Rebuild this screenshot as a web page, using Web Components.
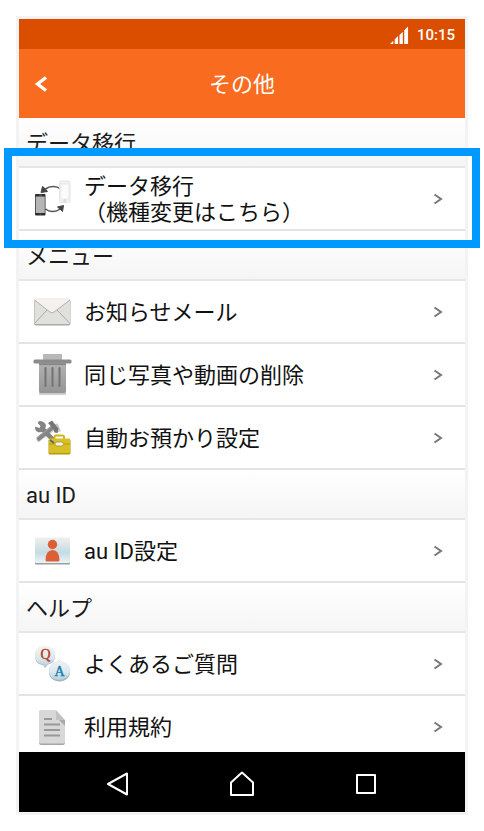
<!DOCTYPE html>
<html lang="ja">
<head>
<meta charset="utf-8">
<meta name="viewport" content="width=device-width, initial-scale=1">
<title>その他</title>
<style>
  * {
    box-sizing: border-box;
  }

  body {
    margin: 0;
    padding: 16px;
    height: 100vh;
    background: #fff;
    color: #1a1a1a;
    font: 22px/26px Roboto, "Noto Sans CJK JP", sans-serif;
  }
</style>
</head>
<body>
<phone-frame>
  <status-bar slot="top" time="10:15"></status-bar>
  <title-bar slot="top">その他</title-bar>

  <list-section label="データ移行">
    <menu-item icon="transfer" highlighted>データ移行<br>（機種変更はこちら）</menu-item>
  </list-section>
  <list-section label="メニュー">
    <menu-item icon="mail">お知らせメール</menu-item>
    <menu-item icon="trash">同じ写真や動画の削除</menu-item>
    <menu-item icon="tools">自動お預かり設定</menu-item>
  </list-section>
  <list-section label="au ID">
    <menu-item icon="id">au ID設定</menu-item>
  </list-section>
  <list-section label="ヘルプ">
    <menu-item icon="faq">よくあるご質問</menu-item>
    <menu-item icon="terms">利用規約</menu-item>
  </list-section>

  <nav-bar slot="bottom"></nav-bar>
</phone-frame>

<script>
const ICONS = {
  transfer: `
    <g fill="none" stroke="#555" stroke-width="1.6">
      <path d="M28.500 12C25 9 18 8.500 13.500 12"/>
      <path d="M13.500 32C17 35 24 35.500 28 32"/>
    </g>
    <path d="M9 15.500L10.500 9.500L12.500 11L15.500 14.500ZM31.500 28.500L25.500 30L28 32L30.500 34.500Z" fill="#444" stroke="#444"/>
    <rect x="3" y="17" width="10.500" height="21.500" rx="1" fill="#2d2d2d"/>
    <rect x="3.700" y="19.500" width="9.100" height="16.500" fill="#b5b5b5"/>
    <path d="M7 18.200h3M7.500 37.200h1.500" stroke="#888" stroke-width=".6"/>
    <rect x="27.500" y="4" width="10.500" height="21.500" rx="1.500" fill="#f1f1f1" stroke="#e2e2e2" stroke-width=".8"/>
    <path d="M28.500 7h8.500v15h-8.500z" fill="#fbfbfb" stroke="#e2e2e2" stroke-width=".6"/>
    <circle cx="32.700" cy="23.700" r=".9" fill="#fff" stroke="#bbb" stroke-width=".6"/>`,
  mail: `
    <rect x="2" y="9.500" width="36.500" height="26" rx="2" fill="#aaa"/>
    <rect x="2.500" y="8.500" width="35.500" height="25.500" rx="1.500" fill="#e0e0dd"/>
    <path d="M3 33L15 20M37.500 33L25 20" stroke="#999" stroke-width=".8"/>
    <path d="M2.500 10Q3 8.500 4 8.500H36.500Q38 8.500 38 10L22 22Q20 23.500 18 22Z" fill="#f5f2ed"/>
    <path d="M2.500 10L18 22Q20 23.500 22 22L38 10" fill="none" stroke="#aaa" stroke-width=".9"/>`,
  trash: `
    <defs><linearGradient id="bin" x2="0" y2="1"><stop stop-color="#b2b2b2"/><stop offset="1" stop-color="#959595"/></linearGradient></defs>
    <rect x="11" y="1" width="19" height="6" fill="#b8b8b8"/>
    <path d="M7 39H34V41Q34 42 33 42H8Q7 42 7 41Z" fill="#ccc"/>
    <path d="M7 9H34V38Q34 40 32 40H9Q7 40 7 38Z" fill="url(#bin)"/>
    <path d="M7 10.500H34V12H7Z" fill="#858585"/>
    <rect x="1.500" y="6.500" width="38" height="4" rx="1.500" fill="#8b8b8b"/>
    <g stroke="#727272" stroke-width="2" stroke-linecap="round"><path d="M13.500 15V33M20.500 15V33M27.500 15V33"/></g>`,
  tools: `
    <path d="M5 25L21 13M24 8L27 16" stroke="#ccc" fill="none" stroke-width="4"/>
    <path d="M6 7L9 10L7.500 12.500L3.500 11Q3 15 6.500 16L10 15.500L20 25.500L23 23L13 12.500L13.500 9Q12 5 7 5.500Z" fill="#848484" stroke="#6b6b6b" stroke-width=".6"/>
    <path d="M5.500 23.500L21 11" stroke="#858585" stroke-width="4.200"/>
    <path d="M5 22L20 10" stroke="#a6a6a6" stroke-width="1"/>
    <path d="M16 7L20 4.500L26.500 12.500L25.500 17L22.500 16.500L21 12.500Z" fill="#767676"/>
    <path d="M22.500 25V21Q22.500 19.500 24 19.500H30.500Q32 19.500 32 21V25" fill="none" stroke="#cfb51c" stroke-width="2"/>
    <rect x="16.500" y="23" width="22" height="15.500" rx="1.500" fill="#b3990c"/>
    <rect x="17" y="22.500" width="21" height="14.500" rx="1" fill="#d8c024"/>
    <path d="M17 28H38" stroke="#a88f0c" stroke-width=".8"/>
    <rect x="23" y="26" width="8.500" height="4" rx="2" fill="#f2f2ee" stroke="#a89520" stroke-width=".8"/>
    <path d="M18 24L22 27" stroke="#666" stroke-width="2"/>`,
  id: `
    <defs><linearGradient id="card" x2="0" y2="1"><stop stop-color="#f0f0ed"/><stop offset=".6" stop-color="#c5dbe4"/><stop offset="1" stop-color="#edf4f5"/></linearGradient></defs>
    <rect x="3" y="9" width="35" height="26.500" rx="1" fill="#999fa3"/>
    <rect x="3" y="8.500" width="35" height="25.500" rx="1" fill="url(#card)"/>
    <circle cx="20.500" cy="15.500" r="4.700" fill="#dc6035"/>
    <path d="M13.500 31Q14 21 20.500 21T27.500 31Q27.500 32.500 26 32.500H15Q13.500 32.500 13.500 31Z" fill="#dc6035"/>`,
  faq: `
    <defs><linearGradient id="bubble" x2="0" y2="1"><stop stop-color="#f4f4f2"/><stop offset=".6" stop-color="#dbe9ef"/><stop offset="1" stop-color="#b5ced9"/></linearGradient></defs>
    <path d="M3 14C3 8 7 4.500 13 4.500S23 8 23 14C23 20 19 22 16 22.500L13 26L11 23C6 23 3 19 3 14Z" fill="#aebfc7"/>
    <path d="M3 13C3 7 7 4 13 4S23 7 23 13C23 19 19 21 16 21.500L13 24.500L11 22C6 22 3 18 3 13Z" fill="url(#bubble)"/>
    <path d="M27.500 17L30 20C35 21 38 24 38 30S33 39.500 27.500 39.500S17 36 17 30S20 21 25 20Z" fill="#9fb5bf"/>
    <path d="M27.500 17L30 20C35 21 38 24 38 29S33 38 27.500 38S17 35 17 29S20 21 25 20Z" fill="url(#bubble)"/>
    <text x="13.500" y="17" text-anchor="middle" fill="#b93a21" stroke="#b93a21" stroke-width=".4" font-family="Liberation Serif" font-size="14">Q</text>
    <text x="27.500" y="34" text-anchor="middle" fill="#197cab" stroke="#197cab" stroke-width=".4" font-family="Liberation Serif" font-size="14">A</text>`,
  terms: `
    <path d="M7 6H24V15H33V38Q33 40 31 40H9Q7 40 7 38Z" fill="#a5a5a5"/>
    <path d="M7 6.500Q7 5 8.500 5H24V15H33V37Q33 38.500 31.500 38.500H8.500Q7 38.500 7 37Z" fill="#d8d8d8"/>
    <path d="M24 5V15H33Z" fill="#c2c2c2"/>
    <path d="M27 15H33V21Z" fill="#a9a9a9"/>
    <path d="M12 14H20M12 19.500H28M12 25H28M12 30.500H28" stroke="#989898" stroke-width="2"/>`
};

// Attaches an open shadow root filled from a template
class BaseElement extends HTMLElement {
  constructor() {
    super();
    this.attachShadow({ mode: "open" });
  }

  render(html) {
    const template = document.createElement("template");
    template.innerHTML = `<style>* { box-sizing: border-box; }</style>${html}`;
    this.shadowRoot.replaceChildren(template.content.cloneNode(true));
  }
}

class PhoneFrame extends BaseElement {
  connectedCallback() {
    this.render(`
    <style>
      :host {
        display: flex;
        flex-direction: column;
        height: 100%;
        border: 3px solid #f3f3f3;
      }

      main {
        flex: 1;
        min-height: 0;
      }
    </style>
    <slot name="top"></slot>
    <main><slot></slot></main>
    <slot name="bottom"></slot>
    `);
  }
}

class StatusBar extends BaseElement {
  connectedCallback() {
    this.render(`
    <style>
      :host {
        display: flex;
        flex: none;
        align-items: center;
        justify-content: flex-end;
        gap: 8px;
        height: 30px;
        padding: 2px 10px 0;
        background: #db4e00;
        color: #fff;
        font-size: 15px;
        font-weight: 500;
      }
    </style>
    <svg width="19" height="19" viewBox="0 0 20 20" aria-hidden="true" fill="#fff">
      <path d="M0 19L3.500 15.500V19ZM5 14L8.500 10.500V19H5ZM10 9.500L13.500 6V19H10ZM15 4.500L19 .5V19H15Z"/>
    </svg>
    <time>${this.getAttribute("time")}</time>
    `);
  }
}

class TitleBar extends BaseElement {
  connectedCallback() {
    this.render(`
    <style>
      :host {
        display: grid;
        flex: none;
        grid-template-columns: 44px 1fr 44px;
        align-items: center;
        height: 69px;
        background: #f96b1f;
        color: #fff;
      }

      button {
        display: grid;
        place-items: center;
        height: 44px;
        padding: 0;
        border: 0;
        background: none;
        color: inherit;
      }

      h1 {
        margin: 0;
        padding-top: 2px;
        font-size: 22px;
        font-weight: 400;
        text-align: center;
      }
    </style>
    <button type="button" aria-label="戻る">
      <svg width="14" height="16" viewBox="0 0 14 16" fill="none" stroke="currentColor" stroke-width="3.400">
        <path d="M12 1.500L3.500 8L12 14.500"/>
      </svg>
    </button>
    <h1><slot></slot></h1>
    `);
  }
}

class ListSection extends BaseElement {
  connectedCallback() {
    this.render(`
    <style>
      :host {
        display: block;
      }

      h2 {
        display: flex;
        align-items: center;
        height: 50px;
        margin: 0;
        padding: 4px 7px 0;
        border-bottom: 2px solid #e6e6e6;
        background: linear-gradient(#fff, #f5f5f5);
        font-size: 22px;
        font-weight: 400;
      }
    </style>
    <h2>${this.getAttribute("label")}</h2>
    <slot></slot>
    `);
  }
}

class MenuItem extends BaseElement {
  connectedCallback() {
    this.render(`
    <style>
      :host {
        display: block;
        position: relative;
      }

      a {
        display: flex;
        align-items: center;
        gap: 12px;
        min-height: 63px;
        padding: 0 22px 0 13px;
        border-bottom: 2px solid #e3e3e3;
        background: #fff;
        color: #111;
        text-decoration: none;
      }

      svg {
        flex: none;
      }

      span {
        flex: 1;
        padding-top: 2px;
      }

      :host([highlighted])::after {
        content: "";
        position: absolute;
        inset: -20px -15px -17px;
        z-index: 1;
        border: 8px solid #09f;
        pointer-events: none;
      }
    </style>
    <a href="#">
      <svg width="40" height="44" viewBox="0 0 40 44" aria-hidden="true">${ICONS[this.getAttribute("icon")]}</svg>
      <span><slot></slot></span>
      <svg width="10" height="12" viewBox="0 0 10 12" fill="none" stroke="#777" stroke-width="2" aria-hidden="true">
        <path d="M1.500 1.500L8 6L1.500 10.500"/>
      </svg>
    </a>
    `);
  }
}

class NavBar extends BaseElement {
  connectedCallback() {
    this.render(`
    <style>
      /* sits over the end of the list */
      :host {
        display: block;
        position: relative;
        flex: none;
        background: #000;
      }

      nav {
        display: flex;
        justify-content: center;
        height: 60px;
        padding-top: 3px;
      }

      button {
        display: grid;
        flex: 0 1 28%;
        place-items: center;
        padding: 0;
        border: 0;
        background: none;
      }

      svg {
        fill: none;
        stroke: #fff;
        stroke-width: 2;
        stroke-linejoin: round;
      }
    </style>
    <nav>
      <button type="button" aria-label="戻る">
        <svg width="26" height="26" viewBox="0 0 26 26"><path d="M23 2.500V23.500L4 13Z"/></svg>
      </button>
      <button type="button" aria-label="ホーム">
        <svg width="26" height="26" viewBox="0 0 26 26"><path d="M13 1.500L24 11.500V24H2V11.500Z"/></svg>
      </button>
      <button type="button" aria-label="履歴">
        <svg width="26" height="26" viewBox="0 0 26 26"><path d="M3 4H21V22H3Z"/></svg>
      </button>
    </nav>
    `);
  }
}

customElements.define("phone-frame", PhoneFrame);
customElements.define("status-bar", StatusBar);
customElements.define("title-bar", TitleBar);
customElements.define("list-section", ListSection);
customElements.define("menu-item", MenuItem);
customElements.define("nav-bar", NavBar);
</script>
</body>
</html>
